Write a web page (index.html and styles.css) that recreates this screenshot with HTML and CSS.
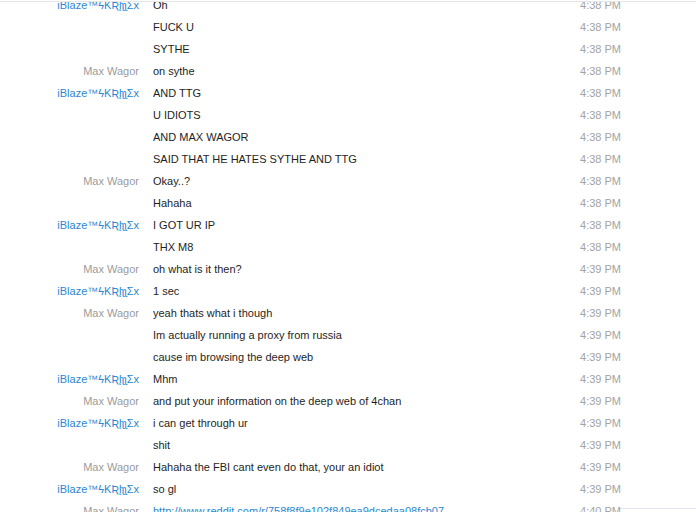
FILE: index.html
```html
<!DOCTYPE html>
<html>
<head>
<meta charset="utf-8">
<link rel="stylesheet" href="styles.css">
</head>
<body>
<div class="rule"></div>
<div class="log">
  <div class="rows">
    <div class="row"><span class="name me">iBlaze™ϟKƦĮʅʅΣx</span><span class="msg">Oh</span><span class="time">4:38 PM</span></div>
    <div class="row"><span class="name"></span><span class="msg">FUCK U</span><span class="time">4:38 PM</span></div>
    <div class="row"><span class="name"></span><span class="msg">SYTHE</span><span class="time">4:38 PM</span></div>
    <div class="row"><span class="name other">Max Wagor</span><span class="msg">on sythe</span><span class="time">4:38 PM</span></div>
    <div class="row"><span class="name me">iBlaze™ϟKƦĮʅʅΣx</span><span class="msg">AND TTG</span><span class="time">4:38 PM</span></div>
    <div class="row"><span class="name"></span><span class="msg">U IDIOTS</span><span class="time">4:38 PM</span></div>
    <div class="row"><span class="name"></span><span class="msg">AND MAX WAGOR</span><span class="time">4:38 PM</span></div>
    <div class="row"><span class="name"></span><span class="msg">SAID THAT HE HATES SYTHE AND TTG</span><span class="time">4:38 PM</span></div>
    <div class="row"><span class="name other">Max Wagor</span><span class="msg">Okay..?</span><span class="time">4:38 PM</span></div>
    <div class="row"><span class="name"></span><span class="msg">Hahaha</span><span class="time">4:38 PM</span></div>
    <div class="row"><span class="name me">iBlaze™ϟKƦĮʅʅΣx</span><span class="msg">I GOT UR IP</span><span class="time">4:38 PM</span></div>
    <div class="row"><span class="name"></span><span class="msg">THX M8</span><span class="time">4:38 PM</span></div>
    <div class="row"><span class="name other">Max Wagor</span><span class="msg">oh what is it then?</span><span class="time">4:39 PM</span></div>
    <div class="row"><span class="name me">iBlaze™ϟKƦĮʅʅΣx</span><span class="msg">1 sec</span><span class="time">4:39 PM</span></div>
    <div class="row"><span class="name other">Max Wagor</span><span class="msg">yeah thats what i though</span><span class="time">4:39 PM</span></div>
    <div class="row"><span class="name"></span><span class="msg">Im actually running a proxy from russia</span><span class="time">4:39 PM</span></div>
    <div class="row"><span class="name"></span><span class="msg">cause im browsing the deep web</span><span class="time">4:39 PM</span></div>
    <div class="row"><span class="name me">iBlaze™ϟKƦĮʅʅΣx</span><span class="msg">Mhm</span><span class="time">4:39 PM</span></div>
    <div class="row"><span class="name other">Max Wagor</span><span class="msg">and put your information on the deep web of 4chan</span><span class="time">4:39 PM</span></div>
    <div class="row"><span class="name me">iBlaze™ϟKƦĮʅʅΣx</span><span class="msg">i can get through ur</span><span class="time">4:39 PM</span></div>
    <div class="row"><span class="name"></span><span class="msg">shit</span><span class="time">4:39 PM</span></div>
    <div class="row"><span class="name other">Max Wagor</span><span class="msg">Hahaha the FBI cant even do that, your an idiot</span><span class="time">4:39 PM</span></div>
    <div class="row"><span class="name me">iBlaze™ϟKƦĮʅʅΣx</span><span class="msg">so gl</span><span class="time">4:39 PM</span></div>
    <div class="row"><span class="name other">Max Wagor</span><span class="msg"><a class="link" href="#">http://www.reddit.com/r/758f8f9e102f849ea9dcedaa08fcb07</a></span><span class="time">4:40 PM</span></div>
  </div>
  <div class="hscroll"></div>
</div>
</body>
</html>
```

FILE: styles.css
```css
html, body {
  margin: 0;
  padding: 0;
  background: #ffffff;
  height: 100%;
  overflow: hidden;
}
body {
  font-family: "Liberation Sans", Arial, "DejaVu Sans", sans-serif;
  font-size: 11px;
  color: #1e1e1e;
  display: flex;
  flex-direction: column;
}
.rule {
  height: 1px;
  flex: none;
  border-bottom: 1px solid #e6e6e6;
}
.log {
  position: relative;
  flex: 1;
  overflow: hidden;
}
.rows {
  margin-top: -8px;
  display: flex;
  flex-direction: column;
}
.row {
  display: grid;
  grid-template-columns: 139px 1fr 70px;
  column-gap: 14px;
  height: 22px;
  line-height: 22px;
  padding-right: 75px;
  white-space: nowrap;
}
.name {
  text-align: right;
  overflow: hidden;
}
.name.me { color: #2a88d2; }
.name.other { color: #9b9b9b; }
.msg { overflow: hidden; }
.time {
  text-align: right;
  color: #a3a3a3;
}
.link {
  color: #2a88d2;
  text-decoration: underline;
}
.hscroll {
  position: absolute;
  right: 0;
  bottom: 3px;
  width: 76px;
  height: 1px;
  background: #dfe5ee;
}
```
